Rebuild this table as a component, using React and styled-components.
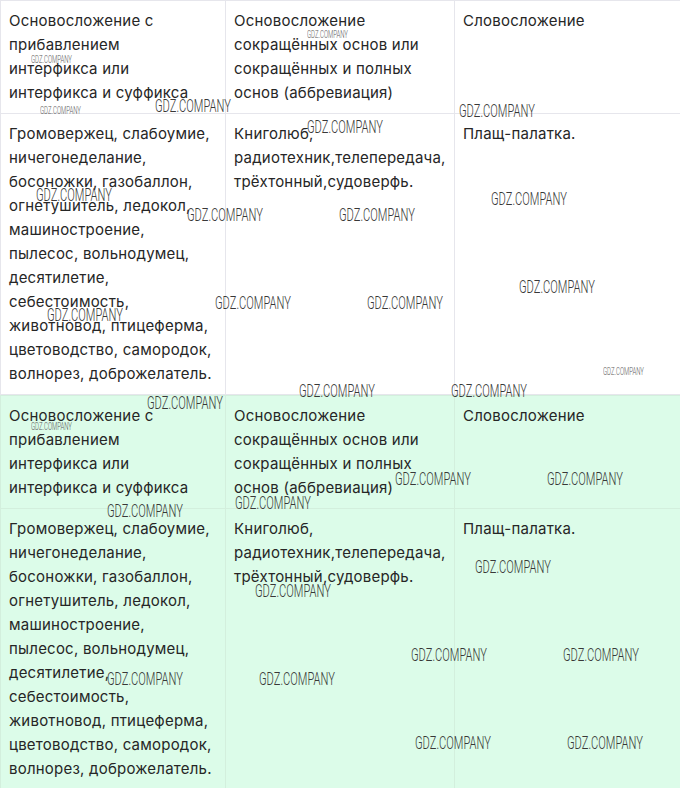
import React from "react";
import styled, { createGlobalStyle } from "styled-components";

const Global = createGlobalStyle`
  html, body { margin: 0; padding: 0; overflow: hidden; background: #ffffff; }
  body { font-family: Inter, "Noto Sans", sans-serif; }
`;

const Page = styled.div`
  position: relative;
  width: 680px;
`;

const Table = styled.table`
  width: 680px;
  border-collapse: collapse;
  table-layout: fixed;
  background: ${(p) => (p.$tint ? "#dcfce9" : "#ffffff")};
`;

const Cell = styled.td`
  vertical-align: top;
  padding: 8px 8px 8px 8px;
  border: 1px solid ${(p) => (p.$tint ? "#d3efdd" : "#e6e6ec")};
  font-size: 15px;
  line-height: 24px;
  color: #262626;
  letter-spacing: 0.22px;
`;

const Mark = styled.span`
  position: absolute;
  left: ${(p) => p.$x}px;
  top: ${(p) => p.$y - (p.$small ? 5 : 10)}px;
  font-family: Roboto, "Liberation Sans", sans-serif;
  font-weight: 300;
  font-size: ${(p) => (p.$small ? 10 : 19)}px;
  line-height: ${(p) => (p.$small ? 10 : 20)}px;
  color: ${(p) => (p.$small ? "#5a5a5a" : "#383838")};
  white-space: nowrap;
  transform: scaleX(${(p) => (p.$small ? 0.6 : 0.585)});
  transform-origin: left center;
  pointer-events: none;
`;

const rows = [
  [
    <>
      Основосложение с прибавлением
      <br />
      интерфикса или интерфикса и суффикса
    </>,
    "Основосложение сокращённых основ или сокращённых и полных основ (аббревиация)",
    "Словосложение",
  ],
  [
    "Громовержец, слабоумие, ничегонеделание, босоножки, газобаллон, огнетушитель, ледокол, машиностроение, пылесос, вольнодумец, десятилетие, себестоимость, животновод, птицеферма, цветоводство, самородок, волнорез, доброжелатель.",
    "Книголюб, радиотехник,телепередача, трёхтонный,судоверфь.",
    "Плащ-палатка.",
  ],
];

const widths = [225, 229, 226];

function Grid({ tint }) {
  return (
    <Table $tint={tint}>
      <colgroup>
        {widths.map((w, i) => (
          <col key={i} style={{ width: w }} />
        ))}
      </colgroup>
      <tbody>
        {rows.map((r, i) => (
          <tr key={i}>
            {r.map((c, j) => (
              <Cell key={j} $tint={tint}>
                {c}
              </Cell>
            ))}
          </tr>
        ))}
      </tbody>
    </Table>
  );
}

const large = [
  [155, 106], [459, 111], [307, 127], [36, 195], [187, 215], [339, 215],
  [491, 199], [519, 287], [215, 303], [367, 303], [47, 315], [299, 391],
  [451, 391], [147, 403], [395, 479], [547, 479], [107, 511], [235, 503],
  [475, 567], [255, 591], [411, 655], [563, 655], [107, 679], [259, 679],
  [415, 743], [567, 743],
];

const small = [
  [31, 60], [40, 111], [307, 35], [603, 372], [31, 427],
];

export default function App() {
  return (
    <Page>
      <Global />
      <Grid />
      <Grid tint />
      {large.map(([x, y], i) => (
        <Mark key={"l" + i} $x={x} $y={y}>
          GDZ.COMPANY
        </Mark>
      ))}
      {small.map(([x, y], i) => (
        <Mark key={"s" + i} $x={x} $y={y} $small>
          GDZ.COMPANY
        </Mark>
      ))}
    </Page>
  );
}
